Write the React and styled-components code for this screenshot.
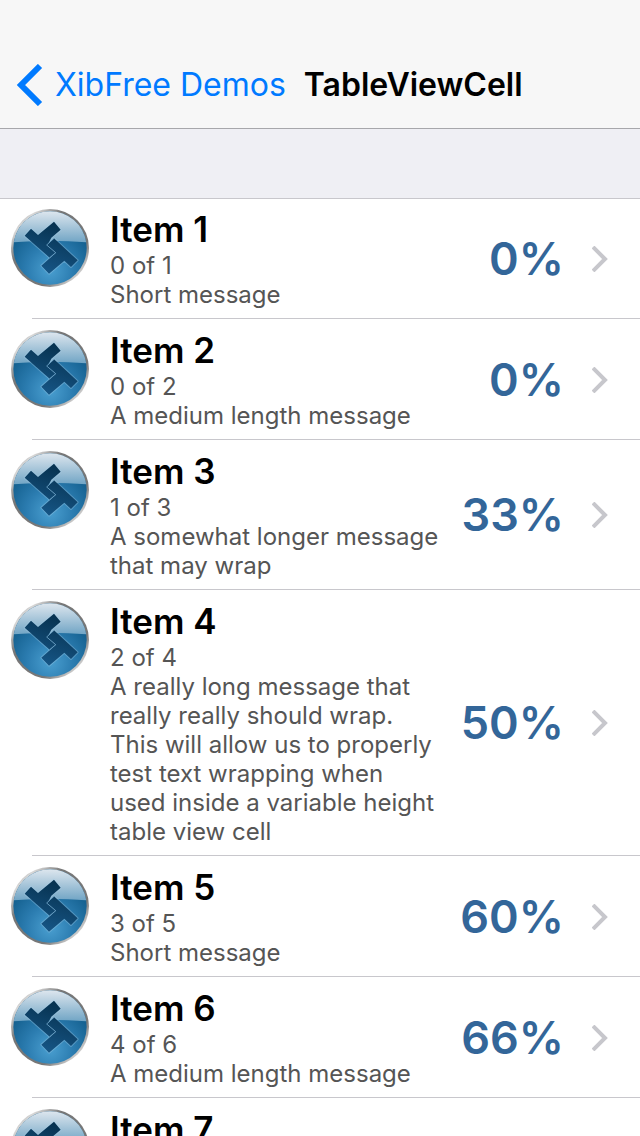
import React from "react";
import styled, { createGlobalStyle } from "styled-components";

const GlobalStyle = createGlobalStyle`
  *, *::before, *::after { box-sizing: border-box; }
  body {
    margin: 0;
    background: #fff;
    color: #000;
    font-family: Inter, "Liberation Sans", sans-serif;
  }
`;

const Screen = styled.div`
  height: 100vh;
  overflow-y: auto;
  scrollbar-width: none;
`;

const NavBar = styled.header`
  display: flex;
  align-items: center;
  gap: 18px;
  padding: 41px 16px 0;
  height: 129px;
  background: #f7f7f7;
  border-bottom: 1px solid #a7a7ab;
`;

const BackLink = styled.a`
  display: flex;
  align-items: center;
  gap: 12px;
  color: #007aff;
  font-size: 32px;
  line-height: 40px;
  text-decoration: none;
  white-space: nowrap;
`;

const NavTitle = styled.h1`
  margin: 0;
  font-size: 32px;
  line-height: 40px;
  font-weight: 600;
  white-space: nowrap;
`;

const SectionGap = styled.div`
  height: 69px;
  background: #efeff4;
`;

const List = styled.ul`
  margin: 0;
  padding: 0;
  list-style: none;
  box-shadow: inset 0 1px #c8c7cc;
`;

const Item = styled.li`
  &::after {
    content: "";
    display: block;
    height: 1px;
    margin-left: 32px;
    background: #c8c7cc;
  }
`;

const Cell = styled.a`
  display: flex;
  align-items: center;
  padding: 10px 32px 9px 10px;
  color: inherit;
  text-decoration: none;
`;

const Badge = styled.svg`
  flex: none;
  align-self: flex-start;
  width: 80px;
  height: 80px;
`;

const Details = styled.div`
  flex: 1;
  min-width: 0;
  margin-left: 20px;
`;

const ItemTitle = styled.h2`
  margin: 0;
  font-size: 35px;
  line-height: 43px;
  font-weight: 600;
`;

const Detail = styled.p`
  margin: 0;
  color: #555;
  font-size: 24px;
  line-height: 29px;
`;

const Percent = styled.span`
  flex: none;
  width: 120px;
  margin-right: 28px;
  color: #336699;
  font-size: 45px;
  line-height: 58px;
  font-weight: 600;
  text-align: right;
`;

const Chevron = styled.svg`
  flex: none;
  display: block;
`;

const items = [
  { id: 1, done: 0, percent: 0, message: "Short message" },
  { id: 2, done: 0, percent: 0, message: "A medium length message" },
  { id: 3, done: 1, percent: 33, message: "A somewhat longer message that may wrap" },
  {
    id: 4,
    done: 2,
    percent: 50,
    message:
      "A really long message that really really should wrap. This will allow us to properly test text wrapping when used inside a variable height table view cell",
  },
  { id: 5, done: 3, percent: 60, message: "Short message" },
  { id: 6, done: 4, percent: 66, message: "A medium length message" },
  { id: 7, done: 5, percent: 71, message: "A somewhat longer message that may wrap" },
];

const UPPER_TEE = "M44 83 L63 62 L84 81 L132 41 L152 65 L124 89 L112 112 L138 134 L119 149 Z";
const LOWER_TEE = "M132 91 L203 157 L183 177 L163 158 L117 197 L94 173 L138 134 L110 111 Z";

function BadgeDefs() {
  return (
    <svg width="0" height="0" style={{ position: "absolute" }} aria-hidden="true">
      <defs>
        <linearGradient id="rim" x1="0" y1="0" x2="1" y2="1">
          <stop offset="0" stopColor="#777" />
          <stop offset="0.17" stopColor="#d8d8d8" />
          <stop offset="0.34" stopColor="#777" />
          <stop offset="0.7" stopColor="#777" />
          <stop offset="0.85" stopColor="#ccc" />
          <stop offset="1" stopColor="#777" />
        </linearGradient>
        <radialGradient id="water" cx="0.5" cy="0.8" r="0.62">
          <stop offset="0" stopColor="#4a9fd0" />
          <stop offset="0.5" stopColor="#2c7db1" />
          <stop offset="1" stopColor="#14608f" />
        </radialGradient>
        <linearGradient id="gloss" x1="0" y1="0" x2="0" y2="1">
          <stop offset="0" stopColor="#dde6ee" />
          <stop offset="1" stopColor="#71a5c5" />
        </linearGradient>
        <linearGradient id="tee" gradientUnits="userSpaceOnUse" x1="150" y1="45" x2="100" y2="190">
          <stop offset="0" stopColor="#06304d" />
          <stop offset="1" stopColor="#165585" />
        </linearGradient>
      </defs>
    </svg>
  );
}

function ItemBadge() {
  return (
    <Badge viewBox="0 0 240 240" aria-hidden="true">
      <circle cx="120" cy="120" r="117" fill="url(#rim)" />
      <circle cx="120" cy="120" r="110" fill="url(#water)" />
      <path d="M11.3 103 A110 110 0 0 1 228.7 103 Q120 94 11.3 103Z" fill="url(#gloss)" />
      <g fill="none" stroke="#a5cfe8" strokeOpacity="0.35" strokeWidth="6" strokeLinejoin="round">
        <path d={UPPER_TEE} />
        <path d={LOWER_TEE} />
      </g>
      <g fill="url(#tee)">
        <path d={UPPER_TEE} />
        <path d={LOWER_TEE} />
      </g>
      <path
        d="M132 91 L110 111 L137 134 L119 149"
        fill="none"
        stroke="#79add0"
        strokeOpacity="0.75"
        strokeWidth="3"
        strokeLinejoin="round"
      />
    </Badge>
  );
}

export default function App() {
  return (
    <Screen>
      <GlobalStyle />
      <BadgeDefs />
      <NavBar>
        <BackLink href="#demos">
          <svg width="27" height="42" viewBox="0 0 27 42" aria-hidden="true">
            <path d="M24 2 L5 21 L24 40" fill="none" stroke="#007aff" strokeWidth="6" />
          </svg>
          XibFree Demos
        </BackLink>
        <NavTitle>TableViewCell</NavTitle>
      </NavBar>
      <SectionGap />
      <List>
        {items.map((item) => (
          <Item key={item.id}>
            <Cell href={`#item-${item.id}`}>
              <ItemBadge />
              <Details>
                <ItemTitle>Item {item.id}</ItemTitle>
                <Detail>
                  {item.done} of {item.id}
                </Detail>
                <Detail>{item.message}</Detail>
              </Details>
              <Percent>{item.percent}%</Percent>
              <Chevron width="16" height="26" viewBox="0 0 16 26" aria-hidden="true">
                <path d="M1 1 L13 13 L1 25" fill="none" stroke="#c7c7cc" strokeWidth="4" />
              </Chevron>
            </Cell>
          </Item>
        ))}
      </List>
    </Screen>
  );
}
